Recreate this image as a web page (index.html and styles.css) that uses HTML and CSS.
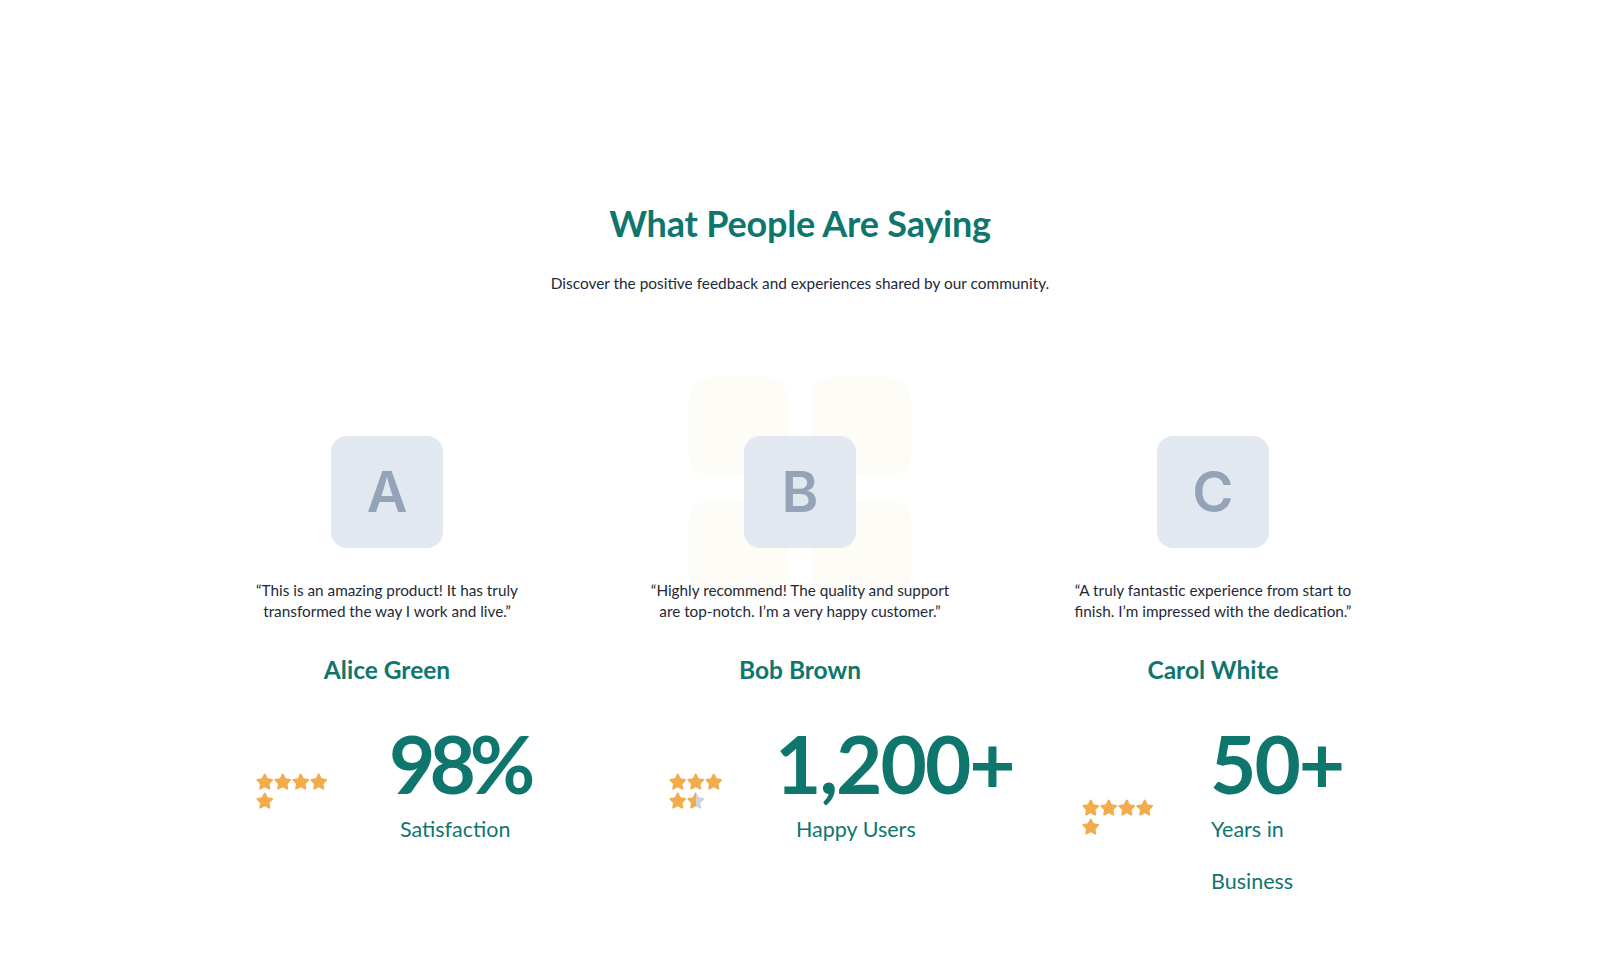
FILE: index.html
```html
<!DOCTYPE html>
<html lang="en">
<head>
<meta charset="utf-8">
<title>What People Are Saying</title>
<link rel="stylesheet" href="styles.css">
</head>
<body>
<svg width="0" height="0" class="defs" aria-hidden="true">
  <defs>
    <linearGradient id="half">
      <stop offset="50%" stop-color="#f3ac4c"/>
      <stop offset="50%" stop-color="#cbd5e1"/>
    </linearGradient>
    <symbol id="star" viewBox="0.6 0.8 22.8 22.8">
      <path d="M12 1.4c.5 0 .9.3 1.1.7l2.7 5.6 6.1.9c1 .1 1.4 1.4.7 2.1l-4.4 4.3 1 6.1c.2 1-.9 1.8-1.8 1.3L12 19.5l-5.4 2.9c-.9.5-2-.3-1.8-1.3l1-6.1-4.4-4.3c-.7-.7-.3-2 .7-2.1l6.1-.9 2.7-5.6c.2-.4.6-.7 1.1-.7z"/>
    </symbol>
  </defs>
</svg>
<section class="testimonials">
  <h1 class="title">What People Are Saying</h1>
  <p class="subtitle">Discover the positive feedback and experiences shared by our community.</p>

  <div class="cards">
    <article class="card card--a">
      <div class="avatar-wrap">
        <div class="avatar">A</div>
      </div>
      <p class="quote">“This is an amazing product! It has truly<br>transformed the way I work and live.”</p>
      <h2 class="name">Alice Green</h2>
      <div class="stats">
        <div class="stars">
          <svg class="star"><use href="#star"/></svg><svg class="star"><use href="#star"/></svg><svg class="star"><use href="#star"/></svg><svg class="star"><use href="#star"/></svg><svg class="star"><use href="#star"/></svg>
        </div>
        <div class="stat">
          <div class="stat-num">98%</div>
          <div class="stat-label">Satisfaction</div>
        </div>
      </div>
    </article>

    <article class="card card--b">
      <div class="avatar-wrap">
        <div class="deco">
          <span class="deco-tile"></span><span class="deco-tile"></span><span class="deco-tile"></span><span class="deco-tile"></span>
        </div>
        <div class="avatar">B</div>
      </div>
      <p class="quote">“Highly recommend! The quality and support<br>are top-notch. I’m a very happy customer.”</p>
      <h2 class="name">Bob Brown</h2>
      <div class="stats">
        <div class="stars">
          <svg class="star"><use href="#star"/></svg><svg class="star"><use href="#star"/></svg><svg class="star"><use href="#star"/></svg><svg class="star"><use href="#star"/></svg><svg class="star star--half"><use href="#star"/></svg>
        </div>
        <div class="stat">
          <div class="stat-num">1,200+</div>
          <div class="stat-label">Happy Users</div>
        </div>
      </div>
    </article>

    <article class="card card--c">
      <div class="avatar-wrap">
        <div class="avatar">C</div>
      </div>
      <p class="quote">“A truly fantastic experience from start to<br>finish. I’m impressed with the dedication.”</p>
      <h2 class="name">Carol White</h2>
      <div class="stats">
        <div class="stars">
          <svg class="star"><use href="#star"/></svg><svg class="star"><use href="#star"/></svg><svg class="star"><use href="#star"/></svg><svg class="star"><use href="#star"/></svg><svg class="star"><use href="#star"/></svg>
        </div>
        <div class="stat">
          <div class="stat-num">50+</div>
          <div class="stat-label">Years in Business</div>
        </div>
      </div>
    </article>
  </div>
</section>
</body>
</html>
```

FILE: styles.css
```css
* { box-sizing: border-box; }

html, body {
  margin: 0;
  padding: 0;
  background: #ffffff;
}

body {
  font-family: "Lato", "Noto Sans", sans-serif;
  color: #1f2937;
}

.defs {
  position: absolute;
  width: 0;
  height: 0;
  overflow: hidden;
}

.testimonials {
  padding-top: 203px;
  display: flex;
  flex-direction: column;
  align-items: center;
}

.title {
  margin: 0;
  font-size: 36px;
  line-height: 40px;
  font-weight: 700;
  color: #0f766e;
  letter-spacing: -0.2px;
}

.subtitle {
  margin: 28px 0 0;
  font-size: 15.4px;
  line-height: 24px;
  color: #1e293b;
}

.cards {
  margin-top: 141px;
  display: grid;
  grid-template-columns: repeat(3, 340px);
  column-gap: 73px;
  align-items: start;
}

.card {
  display: flex;
  flex-direction: column;
  align-items: center;
}

.avatar-wrap {
  position: relative;
  width: 112px;
  height: 112px;
}

.avatar {
  position: relative;
  width: 112px;
  height: 112px;
  border-radius: 16px;
  background: #e2e8f0;
  color: #94a3b8;
  font-family: "Inter", "Noto Sans", sans-serif;
  font-weight: 600;
  font-size: 56px;
  display: flex;
  align-items: center;
  justify-content: center;
}

.deco {
  position: absolute;
  top: -59px;
  left: 50%;
  margin-left: -111px;
  width: 222px;
  display: grid;
  grid-template-columns: 100px 100px;
  gap: 22px;
}

.deco-tile {
  width: 100px;
  height: 100px;
  border-radius: 24px;
  background: #fdfcf6;
}

.quote {
  margin: 32px 0 0;
  font-size: 15.3px;
  line-height: 21px;
  text-align: center;
  color: #1f2937;
  position: relative;
}

.name {
  margin: 32px 0 0;
  font-size: 24.5px;
  line-height: 32px;
  font-weight: 700;
  color: #0f766e;
}

.stats {
  align-self: stretch;
  margin-top: 37px;
  padding-left: 39px;
  display: flex;
  align-items: center;
}

.stars {
  display: flex;
  flex-wrap: wrap;
  width: 73px;
  column-gap: 0.5px;
  row-gap: 1px;
  padding-top: 4px;
  flex-shrink: 0;
}

.star {
  width: 17.5px;
  height: 17.5px;
  fill: #f3ac4c;
  display: block;
}

.star--half { fill: url(#half); }

.stat {
  display: flex;
  flex-direction: column;
}

.stat-num {
  font-size: 80px;
  line-height: 80px;
  font-weight: 700;
  color: #0f766e;
  letter-spacing: -2px;
  white-space: nowrap;
}

.stat-label {
  font-size: 21.5px;
  line-height: 52px;
  color: #0f766e;
}

.card--a .stat { margin-left: 60px; }
.card--a .stat-num { letter-spacing: -6px; }
.card--a .stat-label { padding-left: 11px; }

.card--b .stars { width: 54px; }
.card--b .stat { margin-left: 52px; }
.card--b .stat-label { padding-left: 21px; }

.card--c .stat { margin-left: 55px; }
.card--c .stat-label { max-width: 140px; padding-left: 1px; }
```
